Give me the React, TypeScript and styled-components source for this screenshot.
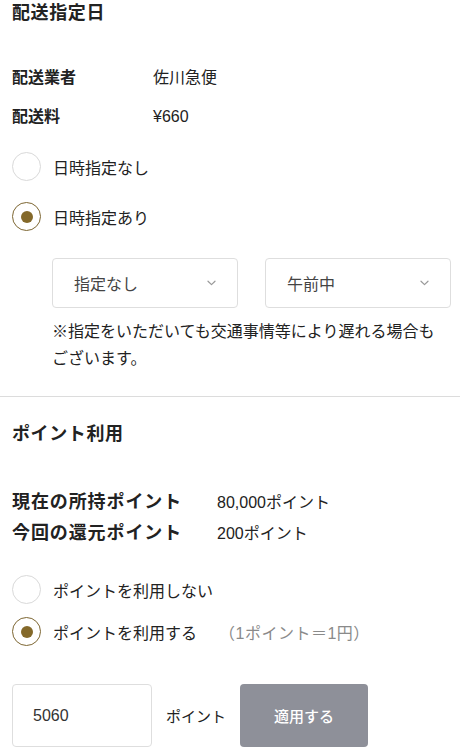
import React from "react";
import styled, { createGlobalStyle } from "styled-components";

const GlobalStyle = createGlobalStyle`
  html, body {
    margin: 0;
    padding: 0;
    background: #ffffff;
  }
  body {
    font-family: "Liberation Sans", "Noto Sans CJK JP", sans-serif;
    color: #222222;
    -webkit-font-smoothing: antialiased;
  }
  * { box-sizing: border-box; }
`;

const Page = styled.div`
  width: 460px;
  display: flex;
  flex-direction: column;
`;

const Section = styled.section<{ $top?: number; $bottom?: number }>`
  display: flex;
  flex-direction: column;
  padding: ${(p) => p.$top ?? 0}px 9px ${(p) => p.$bottom ?? 0}px 12px;
`;

const SectionTitle = styled.h2`
  margin: 0;
  font-size: 18px;
  line-height: 27px;
  font-weight: 700;
  letter-spacing: 0.6px;
  color: #222;
`;

const InfoGrid = styled.dl<{ $labelWidth: number; $lineHeight: number; $gap: number; $mt: number }>`
  margin: ${(p) => p.$mt}px 0 0;
  display: grid;
  grid-template-columns: ${(p) => p.$labelWidth}px 1fr;
  row-gap: ${(p) => p.$gap}px;
  line-height: ${(p) => p.$lineHeight}px;
`;

const InfoLabel = styled.dt<{ $size: number; $spacing?: number }>`
  margin: 0;
  font-size: ${(p) => p.$size}px;
  font-weight: 700;
  letter-spacing: ${(p) => p.$spacing ?? 0}px;
  color: #222;
`;

const InfoValue = styled.dd`
  margin: 0;
  font-size: 16px;
  color: #222;
`;

const RadioGroup = styled.div<{ $mt: number; $gap: number }>`
  margin-top: ${(p) => p.$mt}px;
  display: flex;
  flex-direction: column;
  gap: ${(p) => p.$gap}px;
`;

const RadioRow = styled.label`
  display: flex;
  align-items: center;
  height: 29px;
  gap: 12px;
  font-size: 16px;
  color: #222;
  cursor: pointer;
`;

const RadioCircle = styled.span<{ $checked?: boolean }>`
  flex: none;
  width: 29px;
  height: 29px;
  border-radius: 50%;
  border: 1.5px solid ${(p) => (p.$checked ? "#7d6632" : "#d9d9d9")};
  display: flex;
  align-items: center;
  justify-content: center;
  background: #fff;
  &::after {
    content: "";
    display: ${(p) => (p.$checked ? "block" : "none")};
    width: 12px;
    height: 12px;
    border-radius: 50%;
    background: #84692a;
  }
`;

const RateNote = styled.span`
  margin-left: 10px;
  color: #8a8a8a;
  font-size: 16px;
  letter-spacing: 0.5px;
`;

const SelectRow = styled.div`
  margin: 27px 0 0 40px;
  display: grid;
  grid-template-columns: 1fr 1fr;
  column-gap: 27px;
`;

const SelectBox = styled.div`
  height: 50px;
  border: 1px solid #dedede;
  border-radius: 4px;
  display: flex;
  align-items: center;
  justify-content: space-between;
  padding: 0 21px 0 21px;
  font-size: 16px;
  color: #444;
  background: #fff;
`;

const Note = styled.p`
  margin: 10px 0 0 40px;
  font-size: 16px;
  line-height: 27px;
  color: #222;
`;

const Divider = styled.hr`
  margin: 0;
  border: none;
  height: 1px;
  background: #dcdcdc;
`;

const InputRow = styled.div`
  margin-top: 38px;
  display: flex;
  align-items: center;
  gap: 14px;
`;

const PointInput = styled.div`
  width: 140px;
  height: 63px;
  border: 1px solid #dedede;
  border-radius: 4px;
  display: flex;
  align-items: center;
  padding-left: 20px;
  font-size: 16px;
  color: #333;
`;

const UnitText = styled.span`
  font-size: 15px;
  color: #222;
`;

const ApplyButton = styled.button`
  width: 128px;
  height: 63px;
  border: none;
  border-radius: 4px;
  background: #8e9099;
  color: #ffffff;
  font-family: inherit;
  font-size: 15px;
  font-weight: 500;
  display: flex;
  align-items: center;
  justify-content: center;
`;

const Chevron = () => (
  <svg width="9" height="6" viewBox="0 0 9 6" fill="none">
    <path d="M1 1.2 L4.5 4.6 L8 1.2" stroke="#9a9a9a" strokeWidth="1.2" strokeLinecap="round" strokeLinejoin="round" />
  </svg>
);

export default function App() {
  return (
    <>
      <GlobalStyle />
      <Page>
        <Section $bottom={24}>
          <SectionTitle>配送指定日</SectionTitle>
          <InfoGrid $labelWidth={141} $lineHeight={24} $gap={15} $mt={39}>
            <InfoLabel $size={16}>配送業者</InfoLabel>
            <InfoValue>佐川急便</InfoValue>
            <InfoLabel $size={16}>配送料</InfoLabel>
            <InfoValue>¥660</InfoValue>
          </InfoGrid>
          <RadioGroup $mt={23} $gap={21}>
            <RadioRow>
              <RadioCircle />
              日時指定なし
            </RadioRow>
            <RadioRow>
              <RadioCircle $checked />
              日時指定あり
            </RadioRow>
          </RadioGroup>
          <SelectRow>
            <SelectBox>
              <span>指定なし</span>
              <Chevron />
            </SelectBox>
            <SelectBox>
              <span>午前中</span>
              <Chevron />
            </SelectBox>
          </SelectRow>
          <Note>
            ※指定をいただいても交通事情等により遅れる場合も
            <br />
            ございます。
          </Note>
        </Section>
        <Divider />
        <Section $top={24}>
          <SectionTitle>ポイント利用</SectionTitle>
          <InfoGrid $labelWidth={205} $lineHeight={31} $gap={0} $mt={39}>
            <InfoLabel $size={18} $spacing={0.9}>現在の所持ポイント</InfoLabel>
            <InfoValue>80,000ポイント</InfoValue>
            <InfoLabel $size={18} $spacing={0.9}>今回の還元ポイント</InfoLabel>
            <InfoValue>200ポイント</InfoValue>
          </InfoGrid>
          <RadioGroup $mt={26} $gap={13}>
            <RadioRow>
              <RadioCircle />
              ポイントを利用しない
            </RadioRow>
            <RadioRow>
              <RadioCircle $checked />
              ポイントを利用する
              <RateNote>（1ポイント＝1円）</RateNote>
            </RadioRow>
          </RadioGroup>
          <InputRow>
            <PointInput>5060</PointInput>
            <UnitText>ポイント</UnitText>
            <ApplyButton>適用する</ApplyButton>
          </InputRow>
        </Section>
      </Page>
    </>
  );
}
